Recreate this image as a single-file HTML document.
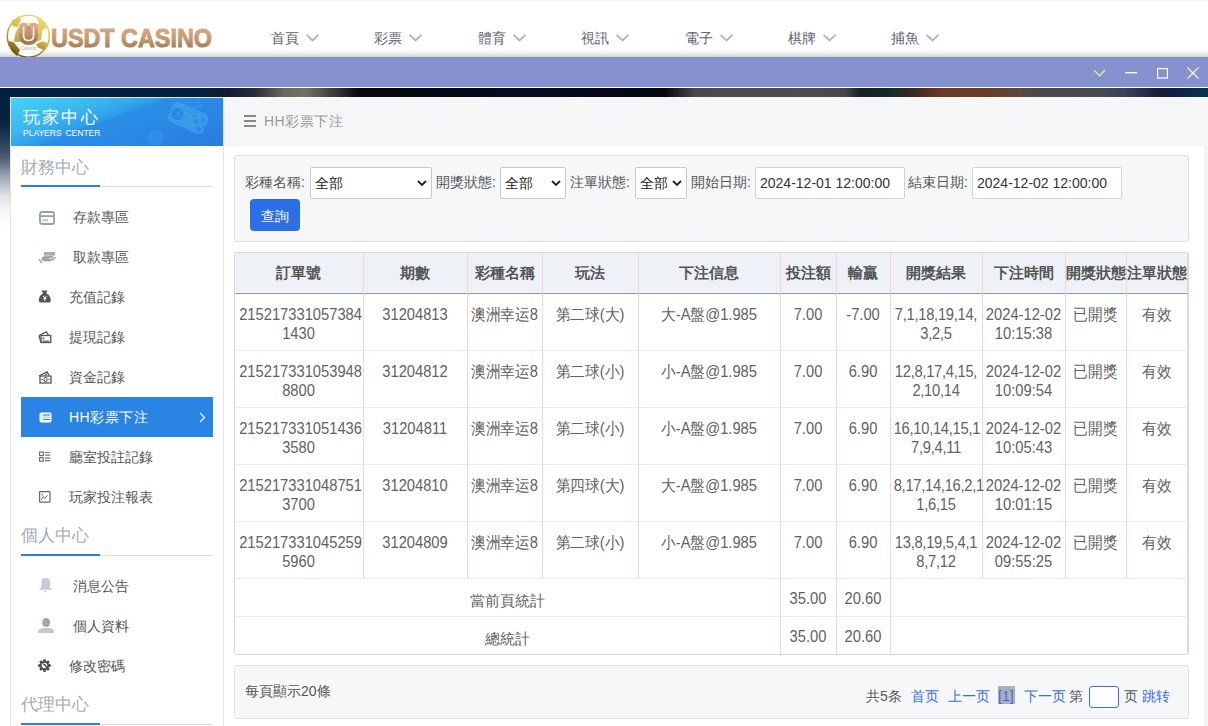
<!DOCTYPE html><html><head><meta charset="utf-8"><style>
*{box-sizing:border-box;margin:0;padding:0}
html,body{width:1208px;height:726px;overflow:hidden;background:#fff;font-family:"Liberation Sans",sans-serif;color:#555}
div,span{white-space:nowrap}
#hdr{position:absolute;left:0;top:0;width:1208px;height:57px;background:linear-gradient(#f2f2f2 0,#fff 1.5px,#fff 49px,#f4f4f2 52px,#d5d5d0 57px)}
#logo-t{position:absolute;left:50px;top:22px;font-size:24px;font-weight:bold;letter-spacing:-0.5px;
 background:linear-gradient(#dcb18c 0%,#c99b73 50%,#9c7650 100%);-webkit-background-clip:text;background-clip:text;color:transparent}
.nav{position:absolute;top:30px;font-size:14px;color:#626272}
.nav svg{position:absolute;left:35px;top:4px}
#pbar{position:absolute;left:0;top:57px;width:1208px;height:31px;background:#8691d0;border-bottom:1px solid #fff}
#pbar svg{position:absolute}
#strip{position:absolute;left:0;top:88px;width:1208px;height:9px;background:linear-gradient(90deg,#03203c 0,#04203c 190px,#101c38 230px,#2a2e38 255px,#6a6a5c 285px,#72725f 305px,#3a3a38 335px,#06060c 360px,#04060e 400px,#060a20 520px,#05070e 665px,#4a4a4a 695px,#4e4e4e 800px,#474747 845px,#1a2224 860px,#0e2a2a 885px,#3a2a20 915px,#6a3a22 940px,#6a3c26 985px,#5a4a3a 1020px,#4a4a48 1040px,#464a50 1100px,#3a4060 1125px,#1a1a38 1160px,#0a2a4a 1190px,#0a3050 1208px)}
#lbg{position:absolute;left:0;top:97px;width:10px;height:629px;background:linear-gradient(#02203f 0,#06223f 22px,#15304e 35px,#4a5a70 60px,#a0a8b4 80px,#dcdfe4 98px,#f4f4f6 112px,#fff 130px,#fff 100%)}
#rbg{position:absolute;left:1204px;top:97px;width:4px;height:629px;background:#f5f5f5}
#side{position:absolute;left:10px;top:97px;width:214px;height:640px;background:#fff;border:1px solid #e6e6e6;border-bottom:none}
#shead{position:absolute;left:0;top:0;width:212px;height:48px;background:linear-gradient(200deg,rgba(255,255,255,0) 45%,rgba(0,0,0,0) 100%),linear-gradient(160deg,#45d2f5 0%,#3ab4f0 30%,#2e9bea 44%,#2890e6 46%,#2a86e3 70%,#2a7ce0 100%);overflow:hidden}
#shead .t1{position:absolute;left:12px;top:8px;font-size:17px;letter-spacing:2.2px;color:#fff}
#shead .t2{position:absolute;left:12px;top:30px;font-size:8.5px;color:#fff;word-spacing:1.5px}
.sec{position:absolute;left:10px;font-size:17px;color:#a4abb4}
.secline{position:absolute;left:10px;width:192px;height:2px;border-bottom:1px solid #ddd}
.secline i{position:absolute;left:0;top:0;width:79px;height:2px;background:#2a7fe0}
.item{position:absolute;left:10px;width:192px;height:40px;font-size:14px;color:#555}
.item span{position:absolute;top:12px}
.item svg{position:absolute}
.item.act{background:#2a84e4;color:#fff}
#main{position:absolute;left:224px;top:97px;width:980px;height:629px;background:#fff}
#crumb{position:absolute;left:0;top:0;width:980px;height:49px;background:#f5f6f8}
#crumb .txt{position:absolute;left:40px;top:16px;font-size:14px;color:#999;letter-spacing:0.5px}
.box{position:absolute;background:#f6f7f9;border:1px solid #dcdfe3;border-radius:3px}
.lbl{position:absolute;font-size:14px;color:#555}
.sel{position:absolute;height:32px;background:#fff;border:1px solid #c9c9c9;border-radius:2px;font-size:14px;color:#222}
.sel span{position:absolute;left:4px;top:7px}
.sel svg{position:absolute;top:12px}
.inp{position:absolute;height:32px;background:#fff;border:1px solid #d3d3d3;border-radius:2px;font-size:14px;color:#333}
.inp span{position:absolute;left:4px;top:7px}
#btn{position:absolute;width:50px;height:32px;background:#2c6fe5;border-radius:4px;color:#fff;font-size:14px}
#btn span{position:absolute;left:11px;top:9px}
.cell{position:absolute;font-size:16px;color:#626262;text-align:center;line-height:19px;transform:scaleX(0.92)}
.th{position:absolute;font-size:15px;font-weight:bold;color:#555;text-align:center}
.vl{position:absolute;width:1px;background:#f5d4d6}
.hl{position:absolute;height:1px;background:#ececec}
.pg{position:absolute;font-size:14px}
</style></head><body>
<div id="hdr"></div>
<svg style="position:absolute;left:0;top:0" width="230" height="57" viewBox="0 0 230 57">
<defs><linearGradient id="gold" gradientUnits="userSpaceOnUse" x1="36" y1="15" x2="18" y2="57"><stop offset="0" stop-color="#efd97a"/><stop offset="0.45" stop-color="#d8b545"/><stop offset="0.8" stop-color="#9a7a22"/><stop offset="1" stop-color="#5e480c"/></linearGradient>
<linearGradient id="ub" x1="0" y1="0" x2="0" y2="1"><stop offset="0" stop-color="#d8aa86"/><stop offset="1" stop-color="#a27a55"/></linearGradient>
<linearGradient id="tg" x1="0" y1="0" x2="0" y2="1"><stop offset="0" stop-color="#dcb08a"/><stop offset="0.55" stop-color="#c49870"/><stop offset="1" stop-color="#96714c"/></linearGradient></defs>
<circle cx="28.3" cy="36.2" r="21" fill="#fffef8" stroke="url(#gold)" stroke-width="1.5"/>
<path d="M36 17 L45 23 L46 28 L41.5 30.5 L38.5 22 Z" fill="url(#gold)"/>
<path d="M11.5 21 L19 16.5 L21 20 L17.5 27 L12.5 26 Z" fill="url(#gold)"/>
<path d="M15.5 33 L18.5 27 L23 26 L22 42 L14 41.5 Z" fill="url(#gold)" opacity="0.85"/>
<path d="M34 26 L39.5 23 L42.5 31 L41 40 L35 42 Z" fill="url(#gold)" opacity="0.9"/>
<path d="M8 41 L13.5 42 L20 50 L17 56 L11.5 51 Z" fill="url(#gold)"/>
<path d="M36 44 L42.5 41.5 L47.5 43 L44 50 L38 47.5 Z" fill="url(#gold)"/>
<path d="M23 23 L34 23 L35 26 L22 26 Z" fill="url(#gold)" opacity="0.6"/>
<path d="M23.6 27.3 V35.5 Q23.6 40.5 28.6 40.5 Q33.6 40.5 33.6 35.5 V27.3" stroke="url(#ub)" stroke-width="9" stroke-linecap="round" fill="none"/>
<rect x="27" y="26" width="3.2" height="10" fill="#c09070"/>
<path d="M23.6 27.3 V35.5 Q23.6 40.5 28.6 40.5 Q33.6 40.5 33.6 35.5 V27.3" stroke="#f7eee6" stroke-width="1.7" stroke-linecap="round" fill="none"/>
<text x="28.5" y="49.8" font-size="5" fill="#c8a88e" text-anchor="middle" font-family="Liberation Sans">Casino</text>
<text x="51" y="46.5" font-size="25" font-weight="bold" font-family="Liberation Sans" textLength="161" lengthAdjust="spacingAndGlyphs" fill="url(#tg)" stroke="url(#tg)" stroke-width="0.9">USDT CASINO</text>
</svg>
<div class="nav" style="left:271px">首頁<svg width="13" height="8" viewBox="0 0 13 8"><path d="M0.5 0.8 L6.5 6.5 L12.5 0.8" stroke="#a9b2d6" stroke-width="1.8" fill="none"/></svg></div>
<div class="nav" style="left:374px">彩票<svg width="13" height="8" viewBox="0 0 13 8"><path d="M0.5 0.8 L6.5 6.5 L12.5 0.8" stroke="#a9b2d6" stroke-width="1.8" fill="none"/></svg></div>
<div class="nav" style="left:478px">體育<svg width="13" height="8" viewBox="0 0 13 8"><path d="M0.5 0.8 L6.5 6.5 L12.5 0.8" stroke="#a9b2d6" stroke-width="1.8" fill="none"/></svg></div>
<div class="nav" style="left:581px">視訊<svg width="13" height="8" viewBox="0 0 13 8"><path d="M0.5 0.8 L6.5 6.5 L12.5 0.8" stroke="#a9b2d6" stroke-width="1.8" fill="none"/></svg></div>
<div class="nav" style="left:685px">電子<svg width="13" height="8" viewBox="0 0 13 8"><path d="M0.5 0.8 L6.5 6.5 L12.5 0.8" stroke="#a9b2d6" stroke-width="1.8" fill="none"/></svg></div>
<div class="nav" style="left:788px">棋牌<svg width="13" height="8" viewBox="0 0 13 8"><path d="M0.5 0.8 L6.5 6.5 L12.5 0.8" stroke="#a9b2d6" stroke-width="1.8" fill="none"/></svg></div>
<div class="nav" style="left:891px">捕魚<svg width="13" height="8" viewBox="0 0 13 8"><path d="M0.5 0.8 L6.5 6.5 L12.5 0.8" stroke="#a9b2d6" stroke-width="1.8" fill="none"/></svg></div>
<div id="pbar">
<svg style="left:1093px;top:12px" width="13" height="8" viewBox="0 0 13 8"><path d="M1 1.2 L6.5 6.8 L12 1.2" stroke="#fff" stroke-width="1.1" fill="none"/></svg>
<svg style="left:1125px;top:14px" width="12" height="3" viewBox="0 0 12 3"><rect x="0" y="1" width="12" height="1.3" fill="#fff"/></svg>
<svg style="left:1157px;top:11px" width="11" height="11" viewBox="0 0 11 11"><rect x="0.6" y="0.6" width="9.8" height="9.4" stroke="#fff" stroke-width="1.2" fill="none"/></svg>
<svg style="left:1187px;top:10px" width="12" height="12" viewBox="0 0 12 12"><path d="M0.5 0.5 L11.5 11.5 M11.5 0.5 L0.5 11.5" stroke="#fff" stroke-width="1.1" fill="none"/></svg>
</div>
<div id="strip"></div><div id="lbg"></div><div id="rbg"></div>
<div id="side">
<div id="shead"><svg style="position:absolute;left:0;top:0" width="212" height="48" viewBox="0 0 212 48">
<g transform="rotate(24 177 20)"><path d="M158 14 Q158 9 165 9 L189 9 Q197 9 197 17 L197 24 Q197 31 189 31 L180 31 Q177 29 174 31 L165 31 Q158 31 158 25 Z" fill="#45a9f0" opacity="0.55"/></g>
<circle cx="166.5" cy="16" r="6" fill="#1f7fe0" opacity="0.7"/>
<path d="M163.5 13 L169.5 19 M169.5 13 L163.5 19" stroke="#3d9ef0" stroke-width="1.4" opacity="0.7"/>
<path d="M177 13 L180 15 M182 17 L185 19" stroke="#1f7fe0" stroke-width="1.5" opacity="0.6"/>
<circle cx="185" cy="23.5" r="2.1" fill="#1f7fe0" opacity="0.6"/><circle cx="192" cy="22" r="2.1" fill="#1f7fe0" opacity="0.6"/>
<circle cx="187.5" cy="31" r="2.1" fill="#1f7fe0" opacity="0.6"/><circle cx="194" cy="29.5" r="2.1" fill="#1f7fe0" opacity="0.6"/>
<path d="M181 10 Q183 7 186 9 Q188 10 190 8 L188 4" stroke="#4aaaf2" stroke-width="1" fill="none" opacity="0.6"/>
<circle cx="144.5" cy="40" r="8.5" fill="#3d9ef0" opacity="0.35"/>
</svg><div class="t1">玩家中心</div><div class="t2">PLAYERS CENTER</div></div>
<div class="sec" style="top:58px">財務中心</div>
<div class="secline" style="top:87px"><i></i></div>
<div class="item" style="top:99px"><svg style="left:18px;top:14px" width="16" height="14" viewBox="0 0 16 14"><rect x="1" y="1" width="14" height="12" rx="2" stroke="#94a0aa" stroke-width="1.8" fill="none"/><rect x="1" y="4.2" width="14" height="1.8" fill="#94a0aa"/><rect x="3.6" y="7.8" width="1" height="2.8" fill="#94a0aa"/><rect x="5.6" y="7.8" width="1" height="2.8" fill="#94a0aa"/><rect x="7.6" y="7.8" width="1" height="2.8" fill="#94a0aa"/></svg><span style="left:52px">存款專區</span></div>
<div class="item" style="top:139px"><svg style="left:17px;top:15px" width="19" height="13" viewBox="0 0 19 13"><rect x="6" y="0" width="11" height="3.6" fill="#a4adb5"/><path d="M4 5 Q6 4 9 4 L15 4 Q16 5 14 6 L10.5 6.5 Q12 7.5 14 6.8 L17.5 4.8 Q18.5 5.5 17 7 Q14 9.5 10 9.5 L6 9.3 Q4.5 9 3.5 8 Z" fill="#9ba5ae"/><path d="M0.3 7.6 L1.6 6.8 L4.5 10.8 L3.2 11.6 Z" fill="#9ba5ae"/></svg><span style="left:52px">取款專區</span></div>
<div class="item" style="top:179px"><svg style="left:17px;top:13px" width="14" height="14" viewBox="0 0 14 14"><path d="M3.3 0.6 L9.5 0.6 L8.2 3.2 Q12.8 5.5 12.8 10.5 Q12.8 12.6 11 12.6 L2.6 12.6 Q0.8 12.6 0.8 10.5 Q0.8 5.5 5.2 3.2 Z" fill="#555"/><path d="M5 5.8 L6.8 8 L8.6 5.8 M6.8 8 L6.8 11 M5.3 8.6 L8.3 8.6" stroke="#fff" stroke-width="1" fill="none"/></svg><span style="left:48px">充值記錄</span></div>
<div class="item" style="top:219px"><svg style="left:17px;top:14px" width="14" height="13" viewBox="0 0 14 13"><path d="M1 4.5 L8.2 0.8 L10.5 4" stroke="#555" stroke-width="1.3" fill="none"/><path d="M1 4.5 L3 11.5" stroke="#555" stroke-width="1.3"/><rect x="3" y="4.5" width="9.8" height="7" stroke="#555" stroke-width="1.3" fill="none"/><rect x="4.5" y="9.5" width="6.8" height="1.5" fill="#777"/><rect x="4.5" y="6.5" width="1.8" height="2" fill="#666"/></svg><span style="left:48px">提現記錄</span></div>
<div class="item" style="top:259px"><svg style="left:17px;top:14px" width="14" height="13" viewBox="0 0 14 13"><path d="M1 5 L9 0.8 L11 4.2" stroke="#555" stroke-width="1.3" fill="none"/><circle cx="8" cy="3.4" r="0.9" fill="#555"/><rect x="2" y="5" width="11" height="7" stroke="#555" stroke-width="1.3" fill="none"/><ellipse cx="7.5" cy="8.5" rx="1.6" ry="2" stroke="#555" stroke-width="1.1" fill="none"/><circle cx="4" cy="8.5" r="0.7" fill="#555"/><circle cx="11" cy="8.5" r="0.7" fill="#555"/></svg><span style="left:48px">資金記錄</span></div>
<div class="item act" style="top:299px"><svg style="left:17px;top:15px" width="14" height="11" viewBox="0 0 14 11"><rect x="1.5" y="0.6" width="12" height="9.8" rx="1.6" fill="#fff"/><rect x="5" y="2.4" width="7" height="1.2" fill="#2a84e4"/><rect x="5" y="4.7" width="7" height="1" fill="#8fc0f0"/><rect x="5" y="6.9" width="7" height="1.2" fill="#2a84e4"/><rect x="3" y="2.4" width="1" height="5.6" fill="#cfe3f7"/></svg><span style="left:48px;letter-spacing:0.5px">HH彩票下注</span><svg style="left:178px;top:15px" width="7" height="11" viewBox="0 0 7 11"><path d="M1 1 L5.5 5.5 L1 10" stroke="#fff" stroke-width="1.3" fill="none"/></svg></div>
<div class="item" style="top:339px"><svg style="left:17px;top:14px" width="14" height="12" viewBox="0 0 14 12"><rect x="1.6" y="1" width="3.6" height="3.6" stroke="#666" stroke-width="1.1" fill="none"/><rect x="1.6" y="6.6" width="3.6" height="3.6" stroke="#666" stroke-width="1.1" fill="none"/><path d="M6.8 1.5 H12.4 M6.8 4.1 H12.4 M6.8 7.1 H12.4 M6.8 9.6 H12.4" stroke="#777" stroke-width="1.1"/></svg><span style="left:48px">廳室投註記錄</span></div>
<div class="item" style="top:379px"><svg style="left:18px;top:14px" width="13" height="13" viewBox="0 0 13 13"><rect x="0.6" y="0.6" width="10.4" height="10.6" rx="0.6" stroke="#666" stroke-width="1.2" fill="none"/><path d="M2.3 8.6 L4.2 5.6 L6 7.4 L8.4 4.3" stroke="#666" stroke-width="1" fill="none"/><circle cx="3.3" cy="3.6" r="0.9" fill="#777"/></svg><span style="left:48px">玩家投注報表</span></div>
<div class="sec" style="top:426px">個人中心</div>
<div class="secline" style="top:456px"><i></i></div>
<div class="item" style="top:468px"><svg style="left:17px;top:12px" width="16" height="16" viewBox="0 0 16 16"><path d="M5.5 0.2 L9.8 0.2 Q12 1 12 3.5 L12 9.2 L15 11.8 L0.5 11.8 L3.4 9.2 L3.4 3.5 Q3.4 1 5.5 0.2 Z" fill="#c8ccd4"/><rect x="6" y="13" width="3" height="1.2" fill="#c8ccd4"/></svg><span style="left:52px">消息公告</span></div>
<div class="item" style="top:508px"><svg style="left:17px;top:12px" width="17" height="16" viewBox="0 0 17 16"><ellipse cx="8.2" cy="4.5" rx="4" ry="4.6" fill="#9ea8b1"/><path d="M0.2 15 L0.2 12.8 Q1 10.8 5 10 L11.5 10 Q15.5 10.8 16 12.8 L16 15 Z" fill="#c4c9d0"/></svg><span style="left:52px">個人資料</span></div>
<div class="item" style="top:548px"><svg style="left:17px;top:13px" width="14" height="14" viewBox="0 0 14 14"><g fill="#4a4a4a"><circle cx="6.5" cy="6.5" r="4.6"/><circle cx="6.5" cy="1.5" r="1.5"/><circle cx="6.5" cy="11.5" r="1.5"/><circle cx="1.5" cy="6.5" r="1.5"/><circle cx="11.5" cy="6.5" r="1.5"/><circle cx="3" cy="3" r="1.5"/><circle cx="10" cy="3" r="1.5"/><circle cx="3" cy="10" r="1.5"/><circle cx="10" cy="10" r="1.5"/></g><circle cx="6.5" cy="6.5" r="2.8" fill="#fff"/><path d="M5.2 5 Q7.5 5.5 8 7.5 L9.6 9.3" stroke="#4a4a4a" stroke-width="1.3" fill="none"/></svg><span style="left:48px">修改密碼</span></div>
<div class="sec" style="top:595px">代理中心</div>
<div class="secline" style="top:625px"><i></i></div>
</div>
<div id="main"><div id="crumb"><svg style="position:absolute;left:20px;top:18px" width="12" height="12" viewBox="0 0 12 12"><rect x="0" y="0" width="12" height="2" fill="#888"/><rect x="0" y="5" width="12" height="2" fill="#888"/><rect x="0" y="10" width="12" height="2" fill="#888"/></svg><div class="txt">HH彩票下注</div></div></div>
<div class="box" style="left:234px;top:155px;width:955px;height:87px"></div>
<div class="lbl" style="left:245px;top:174px">彩種名稱:</div>
<div class="sel" style="left:310px;top:167px;width:122px"><span>全部</span><svg style="left:106px" width="10" height="7" viewBox="0 0 10 7"><path d="M1 1 L5 5 L9 1" stroke="#222" stroke-width="1.8" fill="none"/></svg></div>
<div class="lbl" style="left:436px;top:174px">開獎狀態:</div>
<div class="sel" style="left:500px;top:167px;width:66px"><span>全部</span><svg style="left:50px" width="10" height="7" viewBox="0 0 10 7"><path d="M1 1 L5 5 L9 1" stroke="#222" stroke-width="1.8" fill="none"/></svg></div>
<div class="lbl" style="left:570px;top:174px">注單狀態:</div>
<div class="sel" style="left:635px;top:167px;width:52px"><span>全部</span><svg style="left:36px" width="10" height="7" viewBox="0 0 10 7"><path d="M1 1 L5 5 L9 1" stroke="#222" stroke-width="1.8" fill="none"/></svg></div>
<div class="lbl" style="left:691px;top:174px">開始日期:</div>
<div class="inp" style="left:755px;top:167px;width:150px"><span>2024-12-01 12:00:00</span></div>
<div class="lbl" style="left:908px;top:174px">結束日期:</div>
<div class="inp" style="left:972px;top:167px;width:150px"><span>2024-12-02 12:00:00</span></div>
<div id="btn" style="left:250px;top:199px"><span>查詢</span></div>
<div style="position:absolute;left:234px;top:252px;width:955px;height:403px;border:1px solid #d5d9de;border-radius:3px;background:#fff;overflow:hidden">
<div style="position:absolute;left:0;top:0;width:100%;height:41px;background:linear-gradient(#eef2f6 0,#eef2f6 39px,#f5f9fc 39px,#f5f9fc 40px,#9c9494 40px,#9c9494 41px)"></div>
</div>
<div class="hl" style="left:235px;top:350px;width:952px"></div>
<div class="hl" style="left:235px;top:407px;width:952px"></div>
<div class="hl" style="left:235px;top:464px;width:952px"></div>
<div class="hl" style="left:235px;top:521px;width:952px"></div>
<div class="hl" style="left:235px;top:578px;width:952px"></div>
<div class="hl" style="left:235px;top:616px;width:952px"></div>
<div class="vl" style="left:363px;top:253px;height:325px"></div>
<div class="vl" style="left:467px;top:253px;height:325px"></div>
<div class="vl" style="left:542px;top:253px;height:325px"></div>
<div class="vl" style="left:638px;top:253px;height:325px"></div>
<div class="vl" style="left:780px;top:253px;height:325px"></div>
<div class="vl" style="left:836px;top:253px;height:325px"></div>
<div class="vl" style="left:890px;top:253px;height:325px"></div>
<div class="vl" style="left:982px;top:253px;height:325px"></div>
<div class="vl" style="left:1065px;top:253px;height:325px"></div>
<div class="vl" style="left:1126px;top:253px;height:325px"></div>
<div class="vl" style="left:780px;top:578px;height:76px"></div>
<div class="vl" style="left:836px;top:578px;height:76px"></div>
<div class="vl" style="left:890px;top:578px;height:76px"></div>
<div class="vl" style="left:1187px;top:253px;height:401px"></div>
<div class="th" style="left:234px;top:264px;width:129px">訂單號</div>
<div class="th" style="left:363px;top:264px;width:104px">期數</div>
<div class="th" style="left:467px;top:264px;width:75px">彩種名稱</div>
<div class="th" style="left:542px;top:264px;width:96px">玩法</div>
<div class="th" style="left:638px;top:264px;width:142px">下注信息</div>
<div class="th" style="left:780px;top:264px;width:56px">投注額</div>
<div class="th" style="left:836px;top:264px;width:54px">輸贏</div>
<div class="th" style="left:890px;top:264px;width:92px">開獎結果</div>
<div class="th" style="left:982px;top:264px;width:83px">下注時間</div>
<div class="th" style="left:1065px;top:264px;width:61px">開獎狀態</div>
<div class="th" style="left:1126px;top:264px;width:62px">注單狀態</div>
<div class="cell" style="left:234px;top:305px;width:129px">215217331057384<br>1430</div>
<div class="cell" style="left:363px;top:305px;width:104px">31204813</div>
<div class="cell" style="left:467px;top:305px;width:75px">澳洲幸运8</div>
<div class="cell" style="left:542px;top:305px;width:96px">第二球(大)</div>
<div class="cell" style="left:638px;top:305px;width:142px">大-A盤@1.985</div>
<div class="cell" style="left:780px;top:305px;width:56px">7.00</div>
<div class="cell" style="left:836px;top:305px;width:54px">-7.00</div>
<div class="cell" style="left:890px;top:305px;width:92px;letter-spacing:-0.3px">7,1,18,19,14,<br>3,2,5</div>
<div class="cell" style="left:982px;top:305px;width:83px">2024-12-02<br>10:15:38</div>
<div class="cell" style="left:1065px;top:305px;width:61px">已開獎</div>
<div class="cell" style="left:1126px;top:305px;width:62px">有效</div>
<div class="cell" style="left:234px;top:362px;width:129px">215217331053948<br>8800</div>
<div class="cell" style="left:363px;top:362px;width:104px">31204812</div>
<div class="cell" style="left:467px;top:362px;width:75px">澳洲幸运8</div>
<div class="cell" style="left:542px;top:362px;width:96px">第二球(小)</div>
<div class="cell" style="left:638px;top:362px;width:142px">小-A盤@1.985</div>
<div class="cell" style="left:780px;top:362px;width:56px">7.00</div>
<div class="cell" style="left:836px;top:362px;width:54px">6.90</div>
<div class="cell" style="left:890px;top:362px;width:92px;letter-spacing:-0.3px">12,8,17,4,15,<br>2,10,14</div>
<div class="cell" style="left:982px;top:362px;width:83px">2024-12-02<br>10:09:54</div>
<div class="cell" style="left:1065px;top:362px;width:61px">已開獎</div>
<div class="cell" style="left:1126px;top:362px;width:62px">有效</div>
<div class="cell" style="left:234px;top:419px;width:129px">215217331051436<br>3580</div>
<div class="cell" style="left:363px;top:419px;width:104px">31204811</div>
<div class="cell" style="left:467px;top:419px;width:75px">澳洲幸运8</div>
<div class="cell" style="left:542px;top:419px;width:96px">第二球(小)</div>
<div class="cell" style="left:638px;top:419px;width:142px">小-A盤@1.985</div>
<div class="cell" style="left:780px;top:419px;width:56px">7.00</div>
<div class="cell" style="left:836px;top:419px;width:54px">6.90</div>
<div class="cell" style="left:890px;top:419px;width:92px;letter-spacing:-0.3px">16,10,14,15,1<br>7,9,4,11</div>
<div class="cell" style="left:982px;top:419px;width:83px">2024-12-02<br>10:05:43</div>
<div class="cell" style="left:1065px;top:419px;width:61px">已開獎</div>
<div class="cell" style="left:1126px;top:419px;width:62px">有效</div>
<div class="cell" style="left:234px;top:476px;width:129px">215217331048751<br>3700</div>
<div class="cell" style="left:363px;top:476px;width:104px">31204810</div>
<div class="cell" style="left:467px;top:476px;width:75px">澳洲幸运8</div>
<div class="cell" style="left:542px;top:476px;width:96px">第四球(大)</div>
<div class="cell" style="left:638px;top:476px;width:142px">大-A盤@1.985</div>
<div class="cell" style="left:780px;top:476px;width:56px">7.00</div>
<div class="cell" style="left:836px;top:476px;width:54px">6.90</div>
<div class="cell" style="left:890px;top:476px;width:92px;letter-spacing:-0.3px">8,17,14,16,2,1<br>1,6,15</div>
<div class="cell" style="left:982px;top:476px;width:83px">2024-12-02<br>10:01:15</div>
<div class="cell" style="left:1065px;top:476px;width:61px">已開獎</div>
<div class="cell" style="left:1126px;top:476px;width:62px">有效</div>
<div class="cell" style="left:234px;top:533px;width:129px">215217331045259<br>5960</div>
<div class="cell" style="left:363px;top:533px;width:104px">31204809</div>
<div class="cell" style="left:467px;top:533px;width:75px">澳洲幸运8</div>
<div class="cell" style="left:542px;top:533px;width:96px">第二球(小)</div>
<div class="cell" style="left:638px;top:533px;width:142px">小-A盤@1.985</div>
<div class="cell" style="left:780px;top:533px;width:56px">7.00</div>
<div class="cell" style="left:836px;top:533px;width:54px">6.90</div>
<div class="cell" style="left:890px;top:533px;width:92px;letter-spacing:-0.3px">13,8,19,5,4,1<br>8,7,12</div>
<div class="cell" style="left:982px;top:533px;width:83px">2024-12-02<br>09:55:25</div>
<div class="cell" style="left:1065px;top:533px;width:61px">已開獎</div>
<div class="cell" style="left:1126px;top:533px;width:62px">有效</div>
<div class="cell" style="left:234px;top:591px;width:546px;font-size:15px;transform:none">當前頁統計</div>
<div class="cell" style="left:780px;top:589px;width:56px">35.00</div>
<div class="cell" style="left:836px;top:589px;width:54px">20.60</div>
<div class="cell" style="left:234px;top:629px;width:546px;font-size:15px;transform:none">總統計</div>
<div class="cell" style="left:780px;top:627px;width:56px">35.00</div>
<div class="cell" style="left:836px;top:627px;width:54px">20.60</div>
<div class="box" style="left:234px;top:665px;width:955px;height:54px"></div>
<div class="pg" style="left:245px;top:683px;color:#555">每頁顯示20條</div>
<div class="pg" style="left:866px;top:688px;color:#555">共5条</div>
<div class="pg" style="left:911px;top:688px;color:#3a6fe0">首页</div>
<div class="pg" style="left:948px;top:688px;color:#3a6fe0">上一页</div>
<div class="pg" style="left:998px;top:686px;width:17px;height:18px;background:#aab0c0"></div>
<div class="pg" style="left:998px;top:688px;color:#3a6fe0">[1]</div>
<div class="pg" style="left:1024px;top:688px;color:#3a6fe0">下一页</div>
<div class="pg" style="left:1069px;top:688px;color:#555">第</div>
<div style="position:absolute;left:1089px;top:686px;width:30px;height:22px;border:1px solid #3a6fe0;border-radius:3px;background:#fff"></div>
<div class="pg" style="left:1124px;top:688px;color:#555">页</div>
<div class="pg" style="left:1142px;top:688px;color:#3a6fe0">跳转</div>
</body></html>
